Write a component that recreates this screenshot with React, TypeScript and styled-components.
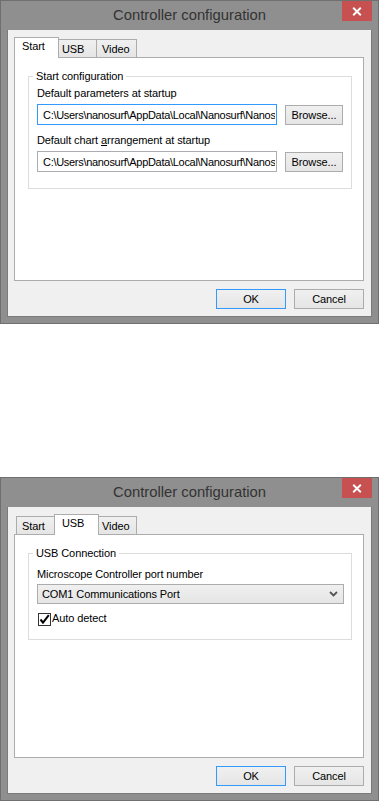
import React from "react";
import styled, { createGlobalStyle } from "styled-components";

const GlobalStyle = createGlobalStyle`
  html, body { margin: 0; padding: 0; background: #ffffff; }
  body { font-family: "Liberation Sans", Arial, sans-serif; }
  *, *::before, *::after { box-sizing: border-box; }
`;

const Page = styled.div`
  width: 379px;
  display: flex;
  flex-direction: column;
  gap: 153px;
`;

const Window = styled.section`
  width: 379px;
  height: 324px;
  border: 1px solid #6f6f6f;
  background: #8f8f8f;
  padding: 0 6px 6px;
  display: flex;
  flex-direction: column;
`;

const TitleBar = styled.header`
  height: 29px;
  flex: none;
  display: grid;
  grid-template-columns: 1fr auto 1fr;
  align-items: start;
`;

const Title = styled.h1`
  grid-column: 2;
  margin: 0;
  font-family: "Liberation Sans", Arial, sans-serif;
  font-weight: 400;
  font-size: 14.8px;
  line-height: 29px;
  color: #333333;
  white-space: nowrap;
`;

const CloseButton = styled.button`
  grid-column: 3;
  justify-self: end;
  width: 30px;
  height: 20px;
  border: 0;
  padding: 0;
  margin: 0;
  background: #c75050;
  display: flex;
  align-items: center;
  justify-content: center;
`;

const Client = styled.div`
  flex: 1;
  min-height: 0;
  background: #f0f0f0;
  border: 1px solid #7b7b7b;
  border-top: 0;
  display: flex;
  flex-direction: column;
`;

const TabControl = styled.div`
  flex: 1;
  min-height: 0;
  display: flex;
  flex-direction: column;
  margin: 7px 7px 0 6px;
`;

const TabStrip = styled.div`
  display: flex;
  align-items: flex-end;
  height: 20px;
  padding-left: 2px;
  position: relative;
  z-index: 1;
`;

const Tab = styled.div<{ $active?: boolean }>`
  position: relative;
  z-index: ${(p) => (p.$active ? 2 : 1)};
  width: ${(p) => (p.$active ? 45 : 41)}px;
  height: ${(p) => (p.$active ? 21 : 18)}px;
  margin: 0 ${(p) => (p.$active ? -3 : -1)}px ${(p) => (p.$active ? -1 : 0)}px
    ${(p) => (p.$active ? -2 : 0)}px;
  border: 1px solid #acacac;
  border-bottom: 0;
  background: ${(p) =>
    p.$active ? "#ffffff" : "linear-gradient(#f0f0f0, #e5e5e5)"};
  display: flex;
  align-items: center;
  padding: 0 0 ${(p) => (p.$active ? 4 : 0)}px ${(p) => (p.$active ? 7 : 5)}px;
  font-size: 11px;
  letter-spacing: -0.1px;
  color: #000;
  white-space: nowrap;
`;

const Panel = styled.div`
  flex: 1;
  min-height: 0;
  background: #ffffff;
  border: 1px solid #acacac;
  display: flex;
  flex-direction: column;
`;

const Group = styled.fieldset<{ $pt: number; $pb: number }>`
  margin: 11px 11px 0 13px;
  padding: ${(p) => p.$pt}px 8px ${(p) => p.$pb}px;
  border: 1px solid #dcdcdc;
  min-width: 0;
`;

const Legend = styled.legend`
  margin-left: -4px;
  padding: 0 3px;
  font-size: 11px;
  line-height: 15px;
  letter-spacing: -0.1px;
  color: #000;
`;

const Stack = styled.div<{ $gap: number }>`
  display: flex;
  flex-direction: column;
  gap: ${(p) => p.$gap}px;
`;

const Field = styled.div<{ $gap: number }>`
  display: flex;
  flex-direction: column;
  gap: ${(p) => p.$gap}px;
`;

const Label = styled.label`
  font-size: 11px;
  line-height: 16px;
  letter-spacing: -0.1px;
  color: #000;
  white-space: nowrap;
`;

const AccessKey = styled.span`
  text-decoration: underline;
`;

const FieldRow = styled.div`
  display: flex;
  align-items: center;
  gap: 8px;
`;

const TextBox = styled.input<{ $focused?: boolean }>`
  flex: 1;
  min-width: 0;
  height: 21px;
  margin: 0;
  padding: 0 1px 0 5px;
  border: 1px solid ${(p) => (p.$focused ? "#3399ff" : "#abadb3")};
  background: #ffffff;
  font-family: "Liberation Sans", Arial, sans-serif;
  font-size: 11px;
  letter-spacing: -0.3px;
  color: #000;
  outline: none;
`;

const PushButton = styled.button<{ $w: number; $default?: boolean }>`
  width: ${(p) => p.$w}px;
  height: 20px;
  flex: none;
  margin: 0;
  padding: 0;
  border: 1px solid ${(p) => (p.$default ? "#3399ff" : "#acacac")};
  background: linear-gradient(#f0f0f0, #e5e5e5);
  font-family: "Liberation Sans", Arial, sans-serif;
  font-size: 11px;
  letter-spacing: -0.1px;
  color: #000;
  display: flex;
  align-items: center;
  justify-content: center;
`;

const ButtonRow = styled.div`
  display: flex;
  justify-content: flex-end;
  gap: 8px;
  padding: 8px 7px 7px 0;
`;

const Combo = styled.div`
  height: 20px;
  border: 1px solid #acacac;
  background: linear-gradient(#f0f0f0, #e5e5e5);
  display: flex;
  align-items: center;
  justify-content: space-between;
  padding: 0 5px 0 4px;
  margin-right: -1px;
  font-size: 11px;
  letter-spacing: -0.1px;
  color: #000;
`;

const CheckRow = styled.label`
  display: flex;
  align-items: center;
  gap: 1px;
  height: 16px;
  padding-left: 1px;
  font-size: 11px;
  letter-spacing: -0.1px;
  color: #000;
`;

const CheckBox = styled.span`
  width: 13px;
  height: 13px;
  border: 1px solid #333333;
  background: #ffffff;
  display: flex;
  align-items: center;
  justify-content: center;
  margin-top: 2px;
`;

const PATH = "C:\\Users\\nanosurf\\AppData\\Local\\Nanosurf\\Nanosurf Studio";

type TabId = "start" | "usb" | "video";

const TABS: { id: TabId; label: string }[] = [
  { id: "start", label: "Start" },
  { id: "usb", label: "USB" },
  { id: "video", label: "Video" },
];

function CloseGlyph() {
  return (
    <svg width="10" height="9" viewBox="0 0 10 9">
      <path
        d="M1.2 0.8 L8.8 8.2 M8.8 0.8 L1.2 8.2"
        stroke="#ffffff"
        strokeWidth="1.9"
        fill="none"
      />
    </svg>
  );
}

function StartPage() {
  return (
    <Group $pt={1} $pb={16}>
      <Legend>Start configuration</Legend>
      <Stack $gap={7}>
        <Field $gap={3}>
          <Label>Default parameters at startup</Label>
          <FieldRow>
            <TextBox $focused readOnly value={PATH} />
            <PushButton $w={58}>Browse...</PushButton>
          </FieldRow>
        </Field>
        <Field $gap={3}>
          <Label>
            Default chart <AccessKey>a</AccessKey>rrangement at startup
          </Label>
          <FieldRow>
            <TextBox readOnly value={PATH} />
            <PushButton $w={58}>Browse...</PushButton>
          </FieldRow>
        </Field>
      </Stack>
    </Group>
  );
}

function UsbPage() {
  return (
    <Group $pt={5} $pb={13}>
      <Legend>USB Connection</Legend>
      <Stack $gap={6}>
        <Field $gap={2}>
          <Label>Microscope Controller port number</Label>
          <Combo>
            <span>COM1 Communications Port</span>
            <svg width="9" height="6" viewBox="0 0 9 6">
              <path
                d="M1 1 L4.5 4.5 L8 1"
                stroke="#555555"
                strokeWidth="1.8"
                fill="none"
              />
            </svg>
          </Combo>
        </Field>
        <CheckRow>
          <CheckBox>
            <svg width="11" height="11" viewBox="0 0 11 11">
              <path
                d="M1.5 5.5 L4 8.6 L9.8 1.2"
                stroke="#000000"
                strokeWidth="2"
                fill="none"
              />
            </svg>
          </CheckBox>
          Auto detect
        </CheckRow>
      </Stack>
    </Group>
  );
}

function Dialog({ tab }: { tab: TabId }) {
  return (
    <Window>
      <TitleBar>
        <Title>Controller configuration</Title>
        <CloseButton aria-label="Close">
          <CloseGlyph />
        </CloseButton>
      </TitleBar>
      <Client>
        <TabControl>
          <TabStrip>
            {TABS.map((t) => (
              <Tab key={t.id} $active={t.id === tab}>
                {t.label}
              </Tab>
            ))}
          </TabStrip>
          <Panel>{tab === "start" ? <StartPage /> : <UsbPage />}</Panel>
        </TabControl>
        <ButtonRow>
          <PushButton $w={70} $default>
            OK
          </PushButton>
          <PushButton $w={70}>Cancel</PushButton>
        </ButtonRow>
      </Client>
    </Window>
  );
}

export default function App() {
  return (
    <>
      <GlobalStyle />
      <Page>
        <Dialog tab="start" />
        <Dialog tab="usb" />
      </Page>
    </>
  );
}
